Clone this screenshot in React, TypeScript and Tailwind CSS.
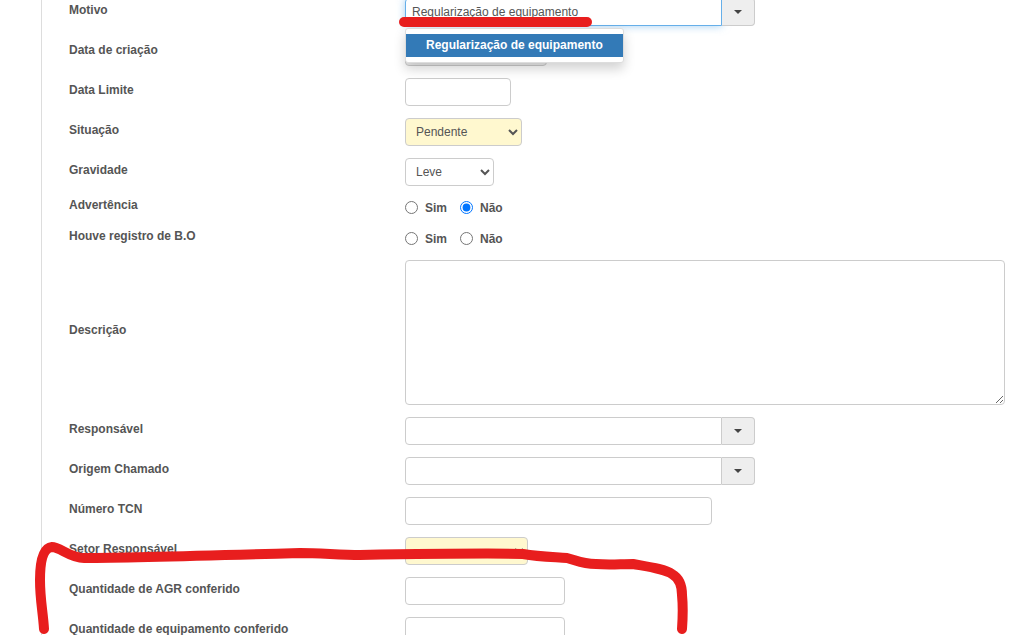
const LABEL = 'w-[363px] shrink-0 pl-[27px] mb-1 text-[12px] font-bold leading-[17px] text-[#555]'
const INPUT = 'h-[28px] rounded-[4px] border border-[#ccc] bg-white text-[12px] text-[#555]'

function Row({ label, children, className = 'mb-3' }: { label: string; children: React.ReactNode; className?: string }) {
  return (
    <div className={`flex items-center ${className}`}>
      <label className={LABEL}>{label}</label>
      {children}
    </div>
  )
}

function Combo({ value, focused }: { value?: string; focused?: boolean }) {
  return (
    <div className="flex w-[350px] h-[28px]">
      <div
        className={`flex-1 min-w-0 rounded-l-[4px] border bg-white px-[6px] text-[12px] leading-[26px] text-[#555] ${
          focused ? 'border-[#66afe9] shadow-[0_0_8px_rgba(102,175,233,0.6)]' : 'border-[#ccc]'
        }`}
      >
        {value}
      </div>
      <div className="flex w-[33px] items-center justify-center rounded-r-[4px] border border-l-0 border-[#ccc] bg-[#eee]">
        <span className="h-0 w-0 border-x-[4px] border-t-[4px] border-x-transparent border-t-[#444]" />
      </div>
    </div>
  )
}

function Radios({ name, checked }: { name: string; checked?: boolean }) {
  return (
    <div className="flex items-center text-[12px] font-bold text-[#555]">
      <input type="radio" name={name} className="m-0 h-[13px] w-[13px]" />
      <span className="ml-[7px] mr-[13px]">Sim</span>
      <input type="radio" name={name} defaultChecked={checked} className="m-0 h-[13px] w-[13px]" />
      <span className="ml-[7px]">Não</span>
    </div>
  )
}

export default function App() {
  return (
    <div className="relative h-[635px] w-[1020px] overflow-hidden bg-white font-['Liberation_Sans',Arial,sans-serif]">
      <div className="ml-[41px] -mt-[2px] border-l border-[#ddd] h-[700px]">
        <Row label="Motivo">
          <Combo value="Regularização de equipamento" focused />
        </Row>
        <Row label="Data de criação">
          <input className={`${INPUT} w-[142px] !bg-[#eee]`} />
        </Row>
        <Row label="Data Limite">
          <input className={`${INPUT} w-[106px]`} />
        </Row>
        <Row label="Situação">
          <select className={`${INPUT} w-[117px] pl-[6px] !bg-[#fff8cf]`} defaultValue="Pendente">
            <option>Pendente</option>
          </select>
        </Row>
        <Row label="Gravidade">
          <select className={`${INPUT} w-[89px] pl-[6px]`} defaultValue="Leve">
            <option>Leve</option>
          </select>
        </Row>
        <Row label="Advertência" className="h-[19px] mb-3">
          <Radios name="advertencia" checked />
        </Row>
        <Row label="Houve registro de B.O" className="h-[19px] mb-[12px]">
          <Radios name="bo" />
        </Row>
        <Row label="Descrição">
          <textarea className="h-[145px] w-[600px] rounded-[4px] border border-[#ccc] bg-white" />
        </Row>
        <Row label="Responsável">
          <Combo />
        </Row>
        <Row label="Origem Chamado">
          <Combo />
        </Row>
        <Row label="Número TCN">
          <input className={`${INPUT} w-[307px]`} />
        </Row>
        <Row label="Setor Responsável">
          <select className={`${INPUT} w-[123px] !bg-[#fff8cf]`} />
        </Row>
        <Row label="Quantidade de AGR conferido">
          <input className={`${INPUT} w-[160px]`} />
        </Row>
        <Row label="Quantidade de equipamento conferido">
          <input className={`${INPUT} w-[160px]`} />
        </Row>
      </div>

      {/* open autocomplete menu */}
      <div className="absolute left-[405px] top-[28px] w-[219px] rounded-[3px] border border-[#ddd] bg-white py-[5px] shadow-[0_6px_12px_rgba(0,0,0,0.18)]">
        <div className="bg-[#337ab7] pl-[20px] text-[12px] font-bold leading-[23px] text-white">Regularização de equipamento</div>
      </div>

      {/* red marker strokes drawn on the screenshot */}
      <svg className="absolute left-0 top-0" width="1020" height="635" fill="none" stroke="#e81e1e" strokeLinecap="round" strokeLinejoin="round">
        <path d="M404 22H587" strokeWidth="10" />
        <path
          d="M44 629C43 612 40 600 40 580C40 565 42 548 52 547C60 547 70 558 84 558C120 558 200 556 300 553C320 553 340 555 360 555C420 554 490 553 523 554C540 557 555 557 567 558C578 561 582 564 596 564C610 565 620 564 633 564C650 567 665 569 672 574C679 578 682 585 682 595C683 605 683 615 682 629"
          strokeWidth="10"
        />
      </svg>
    </div>
  )
}
